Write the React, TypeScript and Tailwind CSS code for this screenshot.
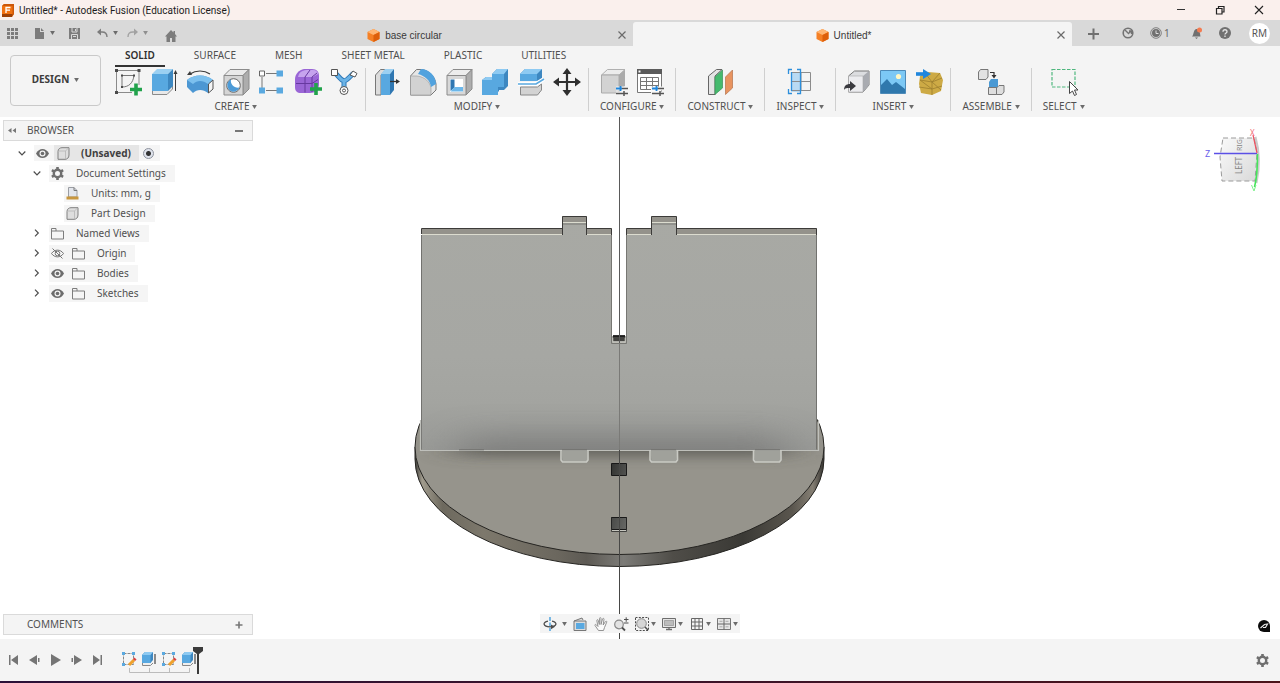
import type { ReactNode } from "react";

const BLUE = "#5aa9e0";
const DARK = "#4d4d4d";

function Caret({ className = "text-[#6b6b6b]" }: { className?: string }) {
  return (
    <svg viewBox="0 0 6 5" className={`h-[4px] w-[5px] shrink-0 ${className}`} aria-hidden="true">
      <path d="M0 0h6L3 5z" fill="currentColor" />
    </svg>
  );
}

function Svg({ size = "size-7", box = "0 0 28 28", children }: { size?: string; box?: string; children: ReactNode }) {
  return (
    <svg viewBox={box} className={`${size} shrink-0 overflow-visible`} fill="none" aria-hidden="true">
      {children}
    </svg>
  );
}

function IconButton({ label, className = "", children }: { label: string; className?: string; children: ReactNode }) {
  return (
    <button type="button" aria-label={label} className={`flex shrink-0 items-center justify-center ${className}`}>
      {children}
    </button>
  );
}

/* ---------- ribbon icons ---------- */

const icons: Record<string, ReactNode> = {
  sketch: (
    <Svg>
      <path d="M2.500 2.500H25M2.500 2.500V24.500H18M25 2.500V17" stroke="#8a8a8a" />
      <path d="M8 7.500h12M8 7.500V19M8 19c7 0 11-4 12-11.500" stroke="#777" />
      <path d="M1 1h3v3H1zM23.500 1h3v3h-3zM1 23h3v3H1zM7 6.500h2v2H7zM19 6.500h2v2h-2zM7 18h2v2H7z" fill="#4a4a4a" />
      <path d="M16 21.500h12M22 15.500v12" stroke="#21a24b" strokeWidth="3.600" />
    </Svg>
  ),
  extrude: (
    <Svg>
      <path d="M2.500 20v6.500H17L22.500 21v-3" fill="#e8e8e8" stroke="#8a8a8a" />
      <path d="M2 6l5-5h16l-5 5z" fill="#9bd0f2" />
      <path d="M2 6h16v17H2z" fill="#58a8e0" />
      <path d="M18 6l5-5v17l-5 5z" fill="#3d87c0" />
      <path d="M25.500 23V4" stroke="#3c3c3c" />
      <path d="M23.500 6l2-4 2 4z" fill="#3c3c3c" />
    </Svg>
  ),
  revolve: (
    <Svg>
      <path d="M4 6C10 2 18 2 24 6" stroke="#3c3c3c" strokeWidth="1.200" />
      <path d="M1 7l3-4 2 4z" fill="#3c3c3c" />
      <path d="M1 12C8 6 20 6 27 12v9l-5 4c-5-4-11-4-15 0l-6-6z" fill="#4c97d3" />
      <path d="M1 12C8 6 20 6 27 12l-5 4C17 12 11 12 7 16z" fill="#7cc0ee" />
      <path d="M22.500 16l4.500-4v9l-4.500 4z" fill="#f4f4f4" stroke="#555" />
    </Svg>
  ),
  hole: (
    <Svg>
      <path d="M2 7.500l6-6h19l-6 6z" fill="#e9e9e9" stroke="#8b8b8b" />
      <path d="M21 7.500l6-6V21l-6 6z" fill="#adadad" stroke="#8b8b8b" />
      <path d="M2 7.500h19V27H2z" fill="#d5d5d5" stroke="#8b8b8b" />
      <circle cx="11.500" cy="17.500" r="6.800" fill="#fff" stroke="#666" />
      <path d="M9 11.600a6.300 6.300 0 1 0 8.500 8c-5 1-9.500-3-8.500-8z" fill="#4d9bd7" />
    </Svg>
  ),
  pattern: (
    <Svg>
      <path d="M8 5.500h11M8 22.500h11M4 9v11" stroke="#777" />
      <path d="M1.500 3h5v5h-5z" fill="#fff" stroke="#666" />
      <path d="M18.500 2.500H25v6h-6.500zM1 19.500h6v6H1zM18.500 19.500H25v6h-6.500z" fill={BLUE} />
    </Svg>
  ),
  form: (
    <Svg>
      <path d="M1 11c0-5 4-9 9-10h8c5 0 7 3 7 7v8c0 6-4 9-9 9H7c-4 0-6-2-6-6z" fill="#9a66d6" />
      <path d="M5 6c2-3 5-4 8-4h6c3 0 5 2 5 4l-5 3H4z" fill="#c6a3ee" />
      <path d="M2 15.500h16l6-4M11 24.500V9l5-7M18 24V9l5-4" stroke="#66389f" strokeWidth="1" />
      <path d="M16 21h12M22 15v12" stroke="#21a24b" strokeWidth="3.600" />
    </Svg>
  ),
  derive: (
    <Svg>
      <path d="M5 5c4 3 5 7 9 8M24 5c-4 3-6 7-10 8M14 12v9" stroke="#2d78b8" strokeWidth="5" />
      <path d="M5 5c4 3 5 7 9 8M24 5c-4 3-6 7-10 8M14 12v9" stroke="#6bb3e6" strokeWidth="3" />
      <path d="M1.500 1.500h6v6h-6zM20 7l3-4 4 2.500-2 3.500z" fill="#fff" stroke="#555" />
      <circle cx="14" cy="22.500" r="4" fill="#fff" stroke="#555" />
      <circle cx="14" cy="22.500" r="1.500" stroke="#555" />
    </Svg>
  ),
  press: (
    <Svg>
      <path d="M2.500 7l5-5.500H13L8 7v20H2.500z" fill="#dcdcdc" stroke="#777" />
      <path d="M8 6l4-5h9l-4 5z" fill="#9bd0f2" />
      <path d="M8 6h9v21H8z" fill="#58a8e0" />
      <path d="M17 6l4-5v21l-4 5z" fill="#2f77b2" />
      <path d="M17 13.500h7" stroke="#333" strokeWidth="1.300" />
      <path d="M23 11l4 2.500-4 2.500z" fill="#333" />
    </Svg>
  ),
  fillet: (
    <Svg>
      <path d="M1.500 8l6-6.500H13C21 3 26 9 27 16v6l-5 5H1.500z" fill="#e6e6e6" stroke="#777" />
      <path d="M1.500 8H8c8 1 13 6 14 12v7H1.500z" fill="#d2d2d2" stroke="#999" strokeWidth=".6" />
      <path d="M12 1c8 0 15 7 15 15l-5 3C21 12 16 8 9 6z" fill="#51a2de" />
    </Svg>
  ),
  shell: (
    <Svg>
      <path d="M2 7.500l6-6h19l-6 6z" fill="#ededed" stroke="#8b8b8b" />
      <path d="M21 7.500l6-6V21l-6 6z" fill="#adadad" stroke="#8b8b8b" />
      <path d="M2 7.500h19V27H2z" fill="#d8d8d8" stroke="#8b8b8b" />
      <path d="M5 11h13v13H5z" fill="#fff" />
      <path d="M5.500 11.500h4v8L5.500 23z" fill="#2f77b2" />
      <path d="M5.500 23.500l4-4.500H18v4.500z" fill="#6cb7ea" />
    </Svg>
  ),
  combine: (
    <Svg>
      <path d="M1 12l4-3h6V6l5-5h11v17l-4 4h-5v1l-4 4H1z" fill="#3d87c0" />
      <path d="M1 12h10V6h12v13h-6v8H1z" fill="#58a8e0" />
      <path d="M1 12l4-3h6v3zM11 6l5-5h11l-4 5z" fill="#8ecaf2" />
    </Svg>
  ),
  split: (
    <Svg>
      <path d="M3 6l5-5h17v10l-4 2H3z" fill="#3d87c0" />
      <path d="M3 6h17v7H3z" fill="#58a8e0" />
      <path d="M3 6l5-5h17l-5 5z" fill="#8ecaf2" />
      <path d="M3.500 19h17l4-3v6l-4 5h-17z" fill="#d3d3d3" stroke="#888" />
      <path d="M1 16h18l8-5" stroke="#fff" strokeWidth="4" />
      <path d="M1 16h18l8-5" stroke={BLUE} strokeWidth="1.600" />
    </Svg>
  ),
  move: (
    <Svg>
      <path d="M14 4v20M4 14h20" stroke="#2f2f2f" strokeWidth="2.200" />
      <path d="M14 0l4.500 6h-9zM14 28l4.500-6h-9zM0 14l6-4.500v9zM28 14l-6-4.500v9z" fill="#2f2f2f" />
    </Svg>
  ),
  configure: (
    <Svg>
      <path d="M1.500 7l6-5.500H25L19 7z" fill="#ececec" stroke="#b0b0b0" />
      <path d="M19 7l6-5.500V18l-6 6z" fill="#ababab" />
      <path d="M1.500 7H19v18H1.500z" fill="#d3d3d3" stroke="#aaa" />
      <path d="M16 20.500h12M16 25.500h12" stroke="#f4f4f4" strokeWidth="4" />
      <path d="M22 20.500h6M16 25.500h12" stroke="#555" strokeWidth="1.500" />
      <path d="M16 20.500h6M20.500 18v5" stroke="#1f86dc" strokeWidth="1.800" />
      <path d="M24 23v5" stroke="#555" strokeWidth="1.500" />
    </Svg>
  ),
  table: (
    <Svg>
      <path d="M1.500 1.500h24v23h-24z" fill="#fff" stroke="#777" />
      <path d="M1 1h25v5H1z" fill="#5b5b5b" />
      <path d="M2.500 2.500h2v2h-2z" fill="#fff" />
      <path d="M4.500 9.500h18v12h-18zM4.500 13.500h18M4.500 17.500h18M10.500 9.500v12M16.500 9.500v12" stroke="#777" />
      <path d="M15 20.500h13M15 25.500h13" stroke="#f4f4f4" strokeWidth="4" />
      <path d="M22 20.500h6M16 25.500h12" stroke="#555" strokeWidth="1.500" />
      <path d="M16 20.500h6M20.500 18v5" stroke="#1f86dc" strokeWidth="1.800" />
      <path d="M24 23v5" stroke="#555" strokeWidth="1.500" />
    </Svg>
  ),
  plane: (
    <Svg>
      <path d="M2.500 8l8-6.500H16L9 8v18.500H2.500z" fill="#e4e4e4" stroke="#666" />
      <path d="M9 9l7.500-7v18L9 26.500z" fill="#45ba6d" stroke="#3b8f57" strokeWidth=".7" />
      <path d="M19.500 9l7-7v18l-7 6.500z" fill="#e8935f" stroke="#b5714a" strokeWidth=".7" />
    </Svg>
  ),
  measure: (
    <Svg>
      <path d="M5 4h10v20H5z" fill="#b9daf3" />
      <path d="M5.500 4.500h19v18h-19zM5.500 13.500h19M15 4v19" stroke="#8c8c8c" />
      <path d="M6 1.500H2.500V6M2.500 21v4.500H6M11 1.500h3.500v24H11M5.500 4v19" stroke="#2d8fdc" strokeWidth="1.300" />
    </Svg>
  ),
  derivein: (
    <Svg>
      <path d="M5.500 8l6-5H26v14l-6 7H5.500z" fill="#dcdde0" stroke="#777" />
      <path d="M20 8l6-5v14l-6 7z" fill="#a9abb1" />
      <path d="M5.500 8H20v16H5.500z" fill="#ececef" stroke="#aaa" strokeWidth=".6" />
      <path d="M1 22c0-4 2-6 6-6v-3l6 5-6 5v-3c-3 0-5 0-6 2z" fill="#3a3a3f" />
    </Svg>
  ),
  image: (
    <Svg>
      <path d="M1.500 2.500h25v23h-25z" fill="#7cc8f5" stroke="#4d8ab8" />
      <path d="M2 17l6-6 5 6 4-3 9 7v4H2z" fill="#2f78ad" />
      <circle cx="19.500" cy="8.500" r="2.600" fill="#fff7c4" />
    </Svg>
  ),
  mesh: (
    <Svg>
      <path d="M5 8l8-4 12 1 3 7-2 11-9 4-11-2-2-9z" fill="#cdaa45" />
      <path d="M5 12l12 2 10-4M4 19l13 2 10-3M17 14v13M5 12l12 9M17 14l9 8M10 5l7 9 8-9" stroke="#9c7d2e" strokeWidth=".8" />
      <path d="M1 6h8" stroke="#1f86dc" strokeWidth="3.600" />
      <path d="M8 1l8 5-8 5z" fill="#1f86dc" />
    </Svg>
  ),
  assemble: (
    <Svg>
      <path d="M1.500 4l2-2.500H11V9l-2 2.500H1.500z" fill="#e2e2e2" stroke="#777" />
      <path d="M13 4.500h4V8" stroke="#333" strokeWidth="1.200" />
      <path d="M14.500 7h5L17 10.500z" fill="#333" />
      <path d="M12 14l2-3h7v8l-2 3h-7z" fill="#4a99d4" />
      <path d="M19.500 20l2.500-2.500h5V24l-2 2.500h-5.500zM11.500 19.500h8v7h-8z" fill="#dedede" stroke="#777" />
    </Svg>
  ),
  select: (
    <Svg>
      <path d="M2 1.500h23V19H2z" stroke="#4fb77e" strokeWidth="1.200" strokeDasharray="3.500 1.500" />
      <path d="M19.500 13.500v12l3-2.500 2 4.500 2-1-2-4.500h3.500z" fill="#fff" stroke="#444" />
    </Svg>
  ),
};

const groups: { name: string; items: [string, string][] }[] = [
  {
    name: "CREATE",
    items: [
      ["sketch", "Create Sketch"],
      ["extrude", "Extrude"],
      ["revolve", "Revolve"],
      ["hole", "Hole"],
      ["pattern", "Rectangular Pattern"],
      ["form", "Create Form"],
      ["derive", "Automated Modeling"],
    ],
  },
  {
    name: "MODIFY",
    items: [
      ["press", "Press Pull"],
      ["fillet", "Fillet"],
      ["shell", "Shell"],
      ["combine", "Combine"],
      ["split", "Split Body"],
      ["move", "Move"],
    ],
  },
  { name: "CONFIGURE", items: [["configure", "Configure Design"], ["table", "Configuration Table"]] },
  { name: "CONSTRUCT", items: [["plane", "Offset Plane"]] },
  { name: "INSPECT", items: [["measure", "Measure"]] },
  { name: "INSERT", items: [["derivein", "Insert Derive"], ["image", "Canvas"], ["mesh", "Insert Mesh"]] },
  { name: "ASSEMBLE", items: [["assemble", "New Component"]] },
  { name: "SELECT", items: [["select", "Select"]] },
];

const ribbonTabs = ["SOLID", "SURFACE", "MESH", "SHEET METAL", "PLASTIC", "UTILITIES"];

/* ---------- title and document tabs ---------- */

function TitleBar() {
  return (
    <header className="flex h-5 items-center bg-[#faf0ed] pl-[2px] pr-[15px] font-[Roboto,'Noto_Sans',sans-serif] text-[10px] text-[#1c1c1c]">
      <Svg size="size-[13px]" box="0 0 13 13">
        <path d="M2 0h10v10l-2 3H0V2z" fill="#f0700f" />
        <path d="M0 10h11l-1 3H0z" fill="#9c3f05" />
        <path d="M2 0h10v10l-1.500 2V2H0z" fill="#cc5608" />
        <path d="M4 9V3.500h4.500M4 6.200h4" stroke="#fff" strokeWidth="1.300" />
      </Svg>
      <h1 className="ml-1 grow">Untitled* - Autodesk Fusion (Education License)</h1>
      <div className="flex gap-[27px]">
        <IconButton label="Minimize" className="size-3">
          <Svg size="size-[10px]" box="0 0 10 10">
            <path d="M1 4.500h8" stroke="#333" />
          </Svg>
        </IconButton>
        <IconButton label="Restore" className="size-3">
          <Svg size="size-[10px]" box="0 0 10 10">
            <path d="M1.500 3.500h5.500v5.500H1.500zM3.500 3V1.500h5.500v5.500H7.500" stroke="#222" strokeWidth="1.200" />
          </Svg>
        </IconButton>
        <IconButton label="Close window" className="size-3">
          <Svg size="size-[10px]" box="0 0 10 10">
            <path d="M1 1l8 8M9 1l-8 8" stroke="#222" strokeWidth="1.100" />
          </Svg>
        </IconButton>
      </div>
    </header>
  );
}

function DocTab({ name, active = false }: { name: string; active?: boolean }) {
  return (
    <div
      className={`flex h-6 min-w-0 flex-1 items-center self-end pt-[2px] font-['Liberation_Sans',Arial,sans-serif] text-[10px] ${
        active ? "rounded-t-[3px] bg-[#f4f4f4]" : ""
      }`}
    >
      <button type="button" role="tab" aria-selected={active} className="flex h-full grow items-center justify-center gap-[5px] pl-1 text-[#3a3a3a]">
        <Svg size="size-[13px]" box="0 0 13 13">
          <path d="M6.500 0l6 3v7l-6 3-6-3V3z" fill="#f58025" />
          <path d="M6.500 0l6 3-6 3-6-3z" fill="#ffb573" />
          <path d="M6.500 6l6-3v7l-6 3z" fill="#dd5f0b" />
        </Svg>
        {name}
      </button>
      <IconButton label={`Close ${name}`} className="h-full w-[22px]">
        <Svg size="size-[8px]" box="0 0 8 8">
          <path d="M.5.5l7 7M7.500.5l-7 7" stroke="#6a6a6a" strokeWidth="1.200" />
        </Svg>
      </IconButton>
    </div>
  );
}

function AppBar() {
  return (
    <div className="flex h-[26px] items-center bg-[#d9d9d9] text-[#7c7c7c]">
      <div className="flex w-[194px] shrink-0 items-center pl-[7px]">
        <IconButton label="Data panel" className="mr-4">
          <Svg size="size-[11px]" box="0 0 11 11">
            <path d="M0 0h3v3H0zM4 0h3v3H4zM8 0h3v3H8zM0 4h3v3H0zM4 4h3v3H4zM8 4h3v3H8zM0 8h3v3H0zM4 8h3v3H4zM8 8h3v3H8z" fill="currentColor" />
          </Svg>
        </IconButton>
        <IconButton label="File" className="gap-[5px]">
          <Svg size="size-[11px]" box="0 0 11 11">
            <path d="M1 0h5v4h4v7H1zM7 0l3 3H7z" fill="currentColor" />
          </Svg>
          <Caret />
        </IconButton>
        <IconButton label="Save" className="ml-[14px]">
          <Svg size="size-[11px]" box="0 0 11 11">
            <path d="M0 0h11v11H0z" fill="currentColor" />
            <path d="M3 0v4h5V0M2.500 11V6.500h6V11" stroke="#d9d9d9" />
            <path d="M6 1h1v2H6zM4 8h3v1H4z" fill="#d9d9d9" />
          </Svg>
        </IconButton>
        <IconButton label="Undo" className="ml-[17px] gap-[5px]">
          <Svg size="size-[11px]" box="0 0 11 11">
            <path d="M1 4h4c3 0 5 1 5 5" stroke="currentColor" strokeWidth="1.400" />
            <path d="M0 4l4-3.500v7z" fill="currentColor" />
          </Svg>
          <Caret />
        </IconButton>
        <IconButton label="Redo" className="ml-[9px] gap-[5px] text-[#a2a2a2]">
          <Svg size="size-[11px]" box="0 0 11 11">
            <path d="M10 4H6C3 4 1 5 1 9" stroke="currentColor" strokeWidth="1.400" />
            <path d="M11 4L7 .5v7z" fill="currentColor" />
          </Svg>
          <Caret className="text-[#8f8f8f]" />
        </IconButton>
        <IconButton label="Home" className="ml-[17px] pt-[5px]">
          <Svg size="size-[12px]" box="0 0 12 12">
            <path d="M6 0l2.500 2.500V1H10v3l2 2.500h-1.500V12H7V8H5v4H1.500V6.500H0z" fill="currentColor" />
          </Svg>
        </IconButton>
      </div>
      <div role="tablist" aria-label="Open documents" className="flex h-full min-w-0 grow">
        <DocTab name="base circular" />
        <DocTab name="Untitled*" active />
      </div>
      <div className="flex w-[208px] shrink-0 items-center justify-between pl-4 pr-[10px] font-['Noto_Sans',sans-serif] text-[10px] text-[#666]">
        <IconButton label="New design">
          <Svg size="size-[11px]" box="0 0 11 11">
            <path d="M0 6h11M5.500.5v11" stroke="#707070" strokeWidth="2" />
          </Svg>
        </IconButton>
        <IconButton label="Extensions" className="ml-2">
          <Svg size="size-[12px]" box="0 0 12 12">
            <circle cx="6" cy="6" r="4.800" stroke="#737373" strokeWidth="1.600" />
            <path d="M6 7l3-3M3 3l3 3M7 4h2.500v3" stroke="#737373" strokeWidth="1.400" />
          </Svg>
        </IconButton>
        <IconButton label="Job status" className="gap-[2px]">
          <Svg size="size-[12px]" box="0 0 12 12">
            <circle cx="6" cy="6" r="5.300" stroke="#808080" />
            <circle cx="6" cy="6" r="4" fill="#707070" />
            <path d="M6 3.500V6.500h2.500" stroke="#ddd" />
          </Svg>
          1
        </IconButton>
        <IconButton label="Notifications" className="ml-[6px]">
          <Svg size="size-[12px]" box="0 0 12 12">
            <path d="M1 9.500c2-1.500 1-6 4-7.500 3-.5 4 3 4.500 7.500zM4 10.500h3L5.500 12z" fill="#707070" />
            <circle cx="8.500" cy="3" r="2.500" fill="#f47b50" />
          </Svg>
        </IconButton>
        <IconButton label="Help">
          <Svg size="size-[12px]" box="0 0 12 12">
            <circle cx="6" cy="6" r="6" fill="#707070" />
            <path d="M4 4.700c0-2.600 4-2.600 4 0C8 6 6 6 6 7.500M6 8.500V10" stroke="#e4e4e4" strokeWidth="1.300" />
          </Svg>
        </IconButton>
        <button type="button" aria-label="Account RM" className="ml-[3px] size-[21px] rounded-full bg-white text-[10px] text-[#555]">
          RM
        </button>
      </div>
    </div>
  );
}

function Ribbon() {
  return (
    <div className="flex h-[71px] bg-[#f4f4f4] text-[10px] text-[#505050]">
      <div className="shrink-0 py-[9px] pl-[10px] pr-[6px]">
        <button
          type="button"
          className="flex h-[51px] w-[91px] items-center justify-center gap-[5px] rounded-[4px] border border-[#c9c9c9] pb-[2px] font-bold text-[#3c3c3c]"
        >
          DESIGN
          <Caret />
        </button>
      </div>
      <div className="flex flex-col">
        <div role="tablist" aria-label="Workspace tabs" className="flex h-[21px] gap-[19px] pl-2">
          {ribbonTabs.map((tab, i) => (
            <button
              key={tab}
              type="button"
              role="tab"
              aria-selected={i === 0}
              className={`shrink-0 whitespace-nowrap border-b-2 px-[10px] ${
                i === 0 ? "border-[#333] font-semibold text-[#2f2f2f]" : "border-transparent"
              }`}
            >
              {tab}
            </button>
          ))}
        </div>
        <div className="flex">
          {groups.map((group) => (
            <section
              key={group.name}
              aria-label={group.name}
              className="mt-px flex h-[43px] shrink-0 flex-col items-center border-r border-[#cfcfcf] px-[7px] last:border-r-0"
            >
              <div className="flex gap-2">
                {group.items.map(([id, label]) => (
                  <IconButton key={id} label={label}>
                    {icons[id]}
                  </IconButton>
                ))}
              </div>
              <button type="button" className="mt-[2px] flex items-center gap-[3px] px-1 leading-[17px]">
                {group.name}
                <Caret />
              </button>
            </section>
          ))}
        </div>
      </div>
    </div>
  );
}

/* ---------- browser tree ---------- */

function Chevron({ open }: { open: boolean }) {
  return (
    <Svg size="size-[8px]" box="0 0 8 8">
      <path d={open ? "M.7 2.500L4 5.800l3.300-3.300" : "M2 .700L5.300 4 2 7.300"} stroke="#4d4d4d" strokeWidth="1.200" />
    </Svg>
  );
}

function Eye({ off = false }: { off?: boolean }) {
  return (
    <Svg size="h-[13px] w-[13px]" box="0 0 13 13">
      {off ? (
        <path d="M.5 6.500C3.500 2 9.500 2 12.500 6.500 9.500 11 3.500 11 .5 6.500zM6.500 4.200a2.300 2.300 0 1 0 0 4.600 2.300 2.300 0 0 0 0-4.600M1.500 1.500l10 10" stroke="#777" />
      ) : (
        <>
          <path d="M0 6.500C3 .500 10 .500 13 6.500 10 12.500 3 12.500 0 6.500z" fill="#6c6c6c" />
          <circle cx="6.500" cy="6.500" r="3" fill="#f4f4f4" />
          <circle cx="6.500" cy="6.500" r="1.800" fill="#6c6c6c" />
        </>
      )}
    </Svg>
  );
}

const treeIcons: Record<string, ReactNode> = {
  part: (
    <Svg size="size-[13px]" box="0 0 13 13">
      <path d="M1 4.500C1 2 3 .7 5 .7h7V8c0 3-2 4.300-4 4.300H1z" fill="#dedede" stroke="#808080" />
      <path d="M1.500 4h7l3-3M8.500 4v8" stroke="#b5b5b5" strokeWidth=".8" />
    </Svg>
  ),
  gear: (
    <Svg size="size-[13px]" box="0 0 13 13">
      <circle cx="6.500" cy="6.500" r="3.700" stroke="#6f6f6f" strokeWidth="2.400" />
      <path d="M6.500 0v3M6.500 10v3M.9 3.200l2.600 1.600M9.500 8.200l2.600 1.600M.9 9.800l2.600-1.600M9.500 4.800l2.600-1.600" stroke="#6f6f6f" strokeWidth="2.600" />
    </Svg>
  ),
  units: (
    <Svg size="size-[13px]" box="0 0 13 13">
      <path d="M2.500.5h5.500l3 3V10H2.500z" fill="#e3e6ec" stroke="#9a9da3" />
      <path d="M8 .5v3h3" stroke="#777" />
      <path d="M.5 9.500h12v3H.5z" fill="#c8973f" />
    </Svg>
  ),
  folder: (
    <Svg size="size-[13px]" box="0 0 13 13">
      <path d="M.5 1.500h4.500v2.500h7.500v8H.5zM.5 4H5" stroke="#7d7d7d" />
    </Svg>
  ),
};

type Row = { label: string; icon: string; indent: string; open?: boolean; eye?: "on" | "off" };

const rows: Row[] = [
  { label: "Document Settings", icon: "gear", indent: "pl-[33px]", open: true },
  { label: "Units: mm, g", icon: "units", indent: "pl-[64px]" },
  { label: "Part Design", icon: "part", indent: "pl-[64px]" },
  { label: "Named Views", icon: "folder", indent: "pl-[33px]", open: false },
  { label: "Origin", icon: "folder", indent: "pl-[33px]", open: false, eye: "off" },
  { label: "Bodies", icon: "folder", indent: "pl-[33px]", open: false, eye: "on" },
  { label: "Sketches", icon: "folder", indent: "pl-[33px]", open: false, eye: "on" },
];

function Browser() {
  return (
    <section aria-label="Browser">
      <div className="ml-[3px] flex h-[21px] w-[250px] items-center border border-[#dadada] bg-[#f4f4f4] pl-1 pr-[9px]">
        <IconButton label="Collapse browser">
          <Svg size="h-[5px] w-[8px]" box="0 0 8 5">
            <path d="M3.500 0v5L0 2.500zM8 0v5L4.500 2.500z" fill="#777" />
          </Svg>
        </IconButton>
        <h2 className="ml-[11px] grow">BROWSER</h2>
        <IconButton label="Minimize browser">
          <Svg size="size-[8px]" box="0 0 8 8">
            <path d="M0 4h8" stroke="#777" strokeWidth="2" />
          </Svg>
        </IconButton>
      </div>
      <ul className="pt-[2px]">
        <li className="flex h-5 items-center pl-[18px]">
          <IconButton label="Toggle (Unsaved)">
            <Chevron open />
          </IconButton>
          <div className="ml-2 flex h-4 items-center bg-[#f5f5f5] pl-[2px] pr-[6px]">
            <IconButton label="Hide (Unsaved)">
              <Eye />
            </IconButton>
            <label htmlFor="active-root" className="ml-[5px] flex h-4 items-center bg-[#e6e6e6] pl-[3px] pr-2 font-bold text-[#404040]">
              {treeIcons.part}
              <span className="ml-[11px]">(Unsaved)</span>
            </label>
            <input
              id="active-root"
              type="radio"
              defaultChecked
              className="ml-1 size-[11px] appearance-none rounded-full border border-[#8c919c] bg-[radial-gradient(circle,#333_0_2px,#dfe3ec_3px)]"
            />
          </div>
        </li>
        {rows.map((row) => (
          <li key={row.label} className={`flex h-5 items-center ${row.indent}`}>
            {row.open !== undefined && (
              <IconButton label={`Toggle ${row.label}`} className="mr-2">
                <Chevron open={row.open} />
              </IconButton>
            )}
            <div className="flex h-[17px] items-center bg-[#f5f5f5] pl-[2px] pr-[9px]">
              {row.eye && (
                <IconButton label={`Visibility of ${row.label}`} className="mr-2">
                  <Eye off={row.eye === "off"} />
                </IconButton>
              )}
              <button type="button" className="flex items-center gap-3">
                {treeIcons[row.icon]}
                {row.label}
              </button>
            </div>
          </li>
        ))}
      </ul>
    </section>
  );
}

/* ---------- viewport ---------- */

function Model() {
  const plate =
    "M422 228.500H562V216.500H587V228.500H611.500V343.500H626.500V228.500H651.500V216.500H676.500V228.500H817V450H422z";
  return (
    <svg viewBox="0 117 1280 522" className="absolute inset-0 size-full" fill="none" role="img" aria-label="Slotted plate standing on a circular base">
      <defs>
        <linearGradient id="rim" x1="414" x2="825" y1="0" y2="0" gradientUnits="userSpaceOnUse">
          <stop offset="0" stopColor="#2f2e2b" />
          <stop offset=".02" stopColor="#a19c8e" />
          <stop offset=".07" stopColor="#6d695e" />
          <stop offset=".17" stopColor="#7d786c" />
          <stop offset=".35" stopColor="#6b675e" />
          <stop offset=".42" stopColor="#5d5a54" />
          <stop offset=".51" stopColor="#7c7b77" />
          <stop offset=".63" stopColor="#4f4d48" />
          <stop offset=".8" stopColor="#3a3935" />
          <stop offset=".92" stopColor="#5a564e" />
          <stop offset=".97" stopColor="#857f74" />
          <stop offset="1" stopColor="#2f2e2b" />
        </linearGradient>
        <linearGradient id="front" x1="0" x2="0" y1="216" y2="450" gradientUnits="userSpaceOnUse">
          <stop offset="0" stopColor="#a8a9a4" />
          <stop offset=".6" stopColor="#a6a7a3" />
          <stop offset=".8" stopColor="#a3a4a0" />
          <stop offset="1" stopColor="#999a97" />
        </linearGradient>
        <linearGradient id="hole" x1="0" x2="1" y1="0" y2="1">
          <stop offset="0" stopColor="#333432" />
          <stop offset="1" stopColor="#686966" />
        </linearGradient>
        <filter id="soft" x="-30%" y="-300%" width="160%" height="700%">
          <feGaussianBlur stdDeviation="24 15" />
        </filter>
        <filter id="contact" x="-30%" y="-300%" width="160%" height="700%">
          <feGaussianBlur stdDeviation="20 7" />
        </filter>
        <clipPath id="disc">
          <ellipse cx="619.500" cy="447" rx="204.500" ry="107.500" />
        </clipPath>
        <clipPath id="plate">
          <path d={plate} />
        </clipPath>
      </defs>

      <path d="M415 447v12a204.500 107.500 0 0 0 409 0v-12z" fill="url(#rim)" stroke="#262522" />
      <ellipse cx="619.500" cy="447" rx="204.500" ry="107.500" fill="#96948c" stroke="#262522" />
      <g clipPath="url(#disc)">
        <rect x="455" y="430" width="335" height="25" fill="#4a4945" opacity=".75" filter="url(#contact)" />
      </g>

      <path d={plate} fill="url(#front)" />
      <g clipPath="url(#plate)">
        <rect x="460" y="437" width="325" height="40" fill="#6a6b6a" opacity=".6" filter="url(#soft)" />
      </g>
      <path d="M422 228.500H562V235H422zM587 228.500H611.500V235H587zM626.500 228.500H651.500V235H626.500zM676.500 228.500H817V235H676.500zM562 216.500H587V223H562zM651.500 216.500H676.500V223H651.500z" fill="#94928b" />
      <path d="M422 234.500H562.500M587 234.500H611M627 234.500H651.500M677 234.500H817M562 222.500H587M652 222.500H676" stroke="#dcdccf" />
      <path d="M562 224H587M652 224H676" stroke="#6f6f6b" strokeWidth=".8" />
      <path d="M421.500 234V228.500H562M562.500 235V216.500H586.500V235M587 228.500H611.500V235M626.500 235V228.500H651.500M651.500 235V216.500H676.500V235M677 228.500H816.500V235" stroke="#3c3b39" />
      <path d="M611.500 235V343.500H626.500V235" stroke="#777773" />
      <path d="M612 336H626V343H612z" fill="#a6a7a2" />
      <path d="M613 335.500H625V341H613z" fill="#444441" />
      <path d="M613 336H625" stroke="#151515" strokeWidth="1.600" />
      <path d="M612.800 342.500V338M625.200 342.500V338M613 342.200H625" stroke="#cfcfc8" strokeWidth=".8" />
      <path d="M421.500 235V449.500M816.500 235V449.500" stroke="#72726f" />
      <path d="M420.500 420V450.500H818.500V420" stroke="#bfc0bb" strokeWidth="1.200" />

      {["M561.500 450.500H587.500V462H562.500z", "M650.500 450.500H677.500L676.500 462H651.500z", "M753.500 450.500H781L780 462H754.500z"].map((d) => (
        <path key={d} d={d} fill="#a0a19b" />
      ))}
      <path d="M561 450V460L562.500 462H586.500L588 460V450M650 450V460L651.500 462H676L677.500 460V450M753.500 450V460L755 462H779.500L781 460V450" stroke="#c9cac4" strokeWidth="1.600" />
      <path d="M562 449.800H587M651 449.800H676M755 449.800H780M459 449.800H484" stroke="#6f706d" />

      <path d="M611.500 463.500H626.500V475.500H611.500zM611.500 517.500H626.500V529.500H611.500z" fill="url(#hole)" stroke="#191919" />
      <path d="M611.500 530.700H626.500" stroke="#d2d2cc" />
      <path d="M611.500 517V531.500H626.500V517" stroke="#2a2a28" strokeWidth=".8" />
      <path d="M619.500 117V343" stroke="#5a5a5a" />
      <path d="M619.500 343V450" stroke="#7a7a77" />
      <path d="M619.500 450V639" stroke="#484846" />
    </svg>
  );
}

function ViewCube() {
  return (
    <svg viewBox="0 0 64 70" className="h-[70px] w-[64px]" fill="none" role="img" aria-label="View cube, left face">
      <defs>
        <linearGradient id="face" x1="0" x2="1" y1="0" y2="1">
          <stop offset="0" stopColor="#fafafa" />
          <stop offset="1" stopColor="#d9d9d9" />
        </linearGradient>
      </defs>
      <path d="M50 10c4 14 4 32 1 46" stroke="#b5b5b5" strokeWidth="3" opacity=".7" />
      <path d="M18 11H49L52 26 50 54H17L15 30z" fill="url(#face)" stroke="#9a9a9a" strokeDasharray="5 3" />
      <g fill="#858585" fontFamily="Noto Sans, sans-serif" fontSize="8">
        <text transform="translate(37 47) rotate(-90)">LEFT</text>
        <text transform="translate(37 24) rotate(-90)" fontSize="7">RIG</text>
      </g>
      <path d="M9 26.500H52" stroke="#5b50e6" strokeWidth="1.400" />
      <path d="M48 8l4 18" stroke="#f0505f" strokeWidth="1.200" />
      <path d="M52.500 27c0 12-.5 24-3 33" stroke="#45e45a" strokeWidth="1.600" />
      <path d="M46.500 58l2.500 6 2-6" stroke="#7df08a" />
      <text x="0" y="30" fontFamily="Noto Sans, sans-serif" fontSize="9" fill="#6a60ea">Z</text>
      <text x="45" y="9" fontFamily="Noto Sans, sans-serif" fontSize="8" fill="#f26d78">X</text>
    </svg>
  );
}

const nav: { label: string; caret?: boolean; icon: ReactNode }[] = [
  {
    label: "Orbit",
    caret: true,
    icon: (
      <>
        <path d="M7 0v14" stroke={BLUE} strokeWidth="1.600" strokeDasharray="4 1.500" />
        <path d="M9 4.200c6 .8 5 5.600-2 5.600S-1 5 5 4.200" stroke={DARK} strokeWidth="1.300" />
        <path d="M8 7.500l4 2.300-4 2.400z" fill={DARK} />
      </>
    ),
  },
  {
    label: "Look At",
    icon: (
      <>
        <path d="M1 4l8-3 1 2M1 4h12v9.500H1z" fill="#ddd" stroke="#777" />
        <path d="M3 6h8.500v6H3z" fill={BLUE} />
      </>
    ),
  },
  {
    label: "Pan",
    icon: (
      <path
        d="M4.500 13.500L1 8.500c-.5-1 .7-1.500 1.500-.5L4 9.500 2.800 3.500c0-1 1.200-1.200 1.500 0l1 4L5.500 1.500c0-1.200 1.500-1.200 1.500 0v6L8.500 2c.3-1 1.600-.8 1.500.3L9.200 8l2.300-3.500c.6-.8 1.600-.2 1.200.7l-2.200 5.300-1 3z"
        fill="#fafafa"
        stroke="#888"
        strokeWidth=".9"
      />
    ),
  },
  {
    label: "Zoom",
    icon: (
      <>
        <circle cx="5" cy="7.500" r="4.300" fill="#e2e2e2" stroke="#888" strokeWidth="1.200" />
        <path d="M8 10.500l3 3" stroke={DARK} strokeWidth="1.800" />
        <path d="M10 2.500h4.500M12.200.300v4.500M10 6h4.500" stroke={DARK} />
      </>
    ),
  },
  {
    label: "Fit",
    caret: true,
    icon: (
      <>
        <path d="M.5.5h13v13H.5z" stroke={DARK} strokeDasharray="2 1.300" />
        <circle cx="6.500" cy="6.500" r="4.800" fill="#d6d6d6" stroke="#888" />
        <path d="M10 10l3 3" stroke={DARK} strokeWidth="1.500" />
      </>
    ),
  },
  {
    label: "Display Settings",
    caret: true,
    icon: (
      <>
        <path d="M.5 1.500h13v9H.5z" fill="#e4e4e4" stroke="#6d6d6d" />
        <path d="M2.500 3.500h9v5h-9z" fill="#bcbcbc" stroke="#888" strokeWidth=".6" />
        <path d="M4 12.500h6M7 10v2" stroke="#6d6d6d" strokeWidth="1.300" />
      </>
    ),
  },
  {
    label: "Grid and Snaps",
    caret: true,
    icon: <path d="M1.500 1.500h11v11h-11zM5 1.500v11M9 1.500v11M1.500 5h11M1.500 9h11" stroke="#666" />,
  },
  {
    label: "Viewports",
    caret: true,
    icon: (
      <>
        <path d="M.5 1.500h13v11H.5z" fill="#e6e6e6" stroke="#777" />
        <path d="M7 1.500v11M.5 7h13" stroke="#666" />
        <path d="M2.500 4.300h3M8.500 4.300h3M2.500 9.800h3M8.500 9.800h3" stroke="#aaa" />
      </>
    ),
  },
];

function NavBar() {
  return (
    <div className="absolute bottom-[6px] left-1/2 flex h-[19px] w-[200px] -translate-x-1/2 items-center justify-between bg-[#f4f4f4] pl-[3px] pr-[2px]">
      {nav.map((item) => (
        <IconButton key={item.label} label={item.label} className={item.label === "Orbit" ? "gap-[5px]" : "gap-[2px]"}>
          <Svg size="size-[14px]" box="0 0 14 14">
            {item.icon}
          </Svg>
          {item.caret && <Caret />}
        </IconButton>
      ))}
    </div>
  );
}

/* ---------- timeline ---------- */

const playback: [string, string][] = [
  ["Go to start", "M1 0h1.500v10H1zM10 0v10L3 5z"],
  ["Step back", "M8 0v10L0 5zM9 3h1.500v4H9z"],
  ["Play", "M1-1l10 6-10 6z"],
  ["Step forward", "M3 0v10l8-5zM.500 3H2v4H.500z"],
  ["Go to end", "M8.500 0H10v10H8.500zM1 0v10l7-5z"],
];

function TimelineSketch() {
  return (
    <Svg size="size-[14px]" box="0 0 14 14">
      <path d="M1.500 1.500h10v11h-10z" stroke="#888" strokeDasharray="3 1" />
      <path d="M0 0h3v3H0zM10 0h3v3h-3zM0 11h3v3H0z" fill={BLUE} />
      <path d="M7 13l5-5" stroke="#f0a12c" strokeWidth="3" />
      <path d="M12 8l1.500-1.500" stroke="#d94040" strokeWidth="3" />
    </Svg>
  );
}

function TimelineExtrude() {
  return (
    <Svg size="size-[14px]" box="0 0 14 14">
      <path d="M.5 8v5.500h8L11 11" fill="#eee" stroke="#888" />
      <path d="M0 3l3-3h8v8l-2.500 3H0z" fill="#3d87c0" />
      <path d="M0 3h8.500v8H0z" fill="#58a8e0" />
      <path d="M0 3l3-3h8L8.500 3z" fill="#8ecaf2" />
      <path d="M13 2v10" stroke="#444" strokeWidth="1.200" />
    </Svg>
  );
}

function Timeline() {
  return (
    <footer>
      <div className="flex h-[42px] items-center bg-[#f4f4f4] pl-2 pr-[11px]">
        <div className="flex gap-[10px]">
          {playback.map(([label, d]) => (
            <IconButton key={label} label={label}>
              <Svg size="size-[11px]" box="0 0 11 11">
                <path d={d} fill="#757575" />
              </Svg>
            </IconButton>
          ))}
        </div>
        <div className="relative ml-[19px] flex grow gap-[6px] pb-[2px]">
          <IconButton label="Sketch1">
            <TimelineSketch />
          </IconButton>
          <IconButton label="Extrude1">
            <TimelineExtrude />
          </IconButton>
          <IconButton label="Sketch2">
            <TimelineSketch />
          </IconButton>
          <IconButton label="Extrude2">
            <TimelineExtrude />
          </IconButton>
          <svg viewBox="0 0 84 30" className="pointer-events-none absolute -top-[6px] left-0 h-[30px] w-[84px]" fill="none" aria-hidden="true">
            <path d="M7.500 22v4.500h60V22M27.500 22v4.500M47.500 22v4.500" stroke="#bcbcbc" />
            <path d="M71 1h10v4l-4 3v20h-2V8l-4-3z" fill="#3b3b3b" />
          </svg>
        </div>
        <IconButton label="Timeline settings">{treeIcons.gear}</IconButton>
      </div>
      <div className="h-[2px] bg-linear-to-r from-[#2b1038] to-[#4b1219]" />
    </footer>
  );
}

export default function App() {
  return (
    <div className="flex min-h-screen flex-col bg-white font-['Noto_Sans',sans-serif] text-[10px] text-[#505050]">
      <TitleBar />
      <AppBar />
      <Ribbon />
      <main className="relative flex grow justify-between">
        <Model />
        <div className="relative flex flex-col justify-between pb-1 pt-[3px]">
          <Browser />
          <section aria-label="Comments" className="ml-[3px] flex h-[21px] w-[250px] items-center border border-[#dadada] bg-[#f4f4f4] pl-[23px] pr-[9px]">
            <h2 className="grow">COMMENTS</h2>
            <IconButton label="Expand comments">
              <Svg size="size-[8px]" box="0 0 8 8">
                <path d="M.500 4h7M4 .500v7" stroke="#777" strokeWidth="1.600" />
              </Svg>
            </IconButton>
          </section>
        </div>
        <NavBar />
        <div className="relative flex flex-col items-end justify-between pb-[7px] pt-[10px]">
          <div className="pr-[11px]">
            <ViewCube />
          </div>
          <IconButton label="Autodesk Assistant" className="mr-[10px]">
            <Svg size="size-[12px]" box="0 0 12 12">
              <path d="M6 0a6 6 0 0 1 6 6v6H6A6 6 0 0 1 6 0z" fill="#0c0c0c" />
              <path d="M2.500 8l4-3.500 3-.5-2 3.500M5 7.500h3" stroke="#e8e8e8" strokeWidth="1.200" />
            </Svg>
          </IconButton>
        </div>
      </main>
      <Timeline />
    </div>
  );
}
